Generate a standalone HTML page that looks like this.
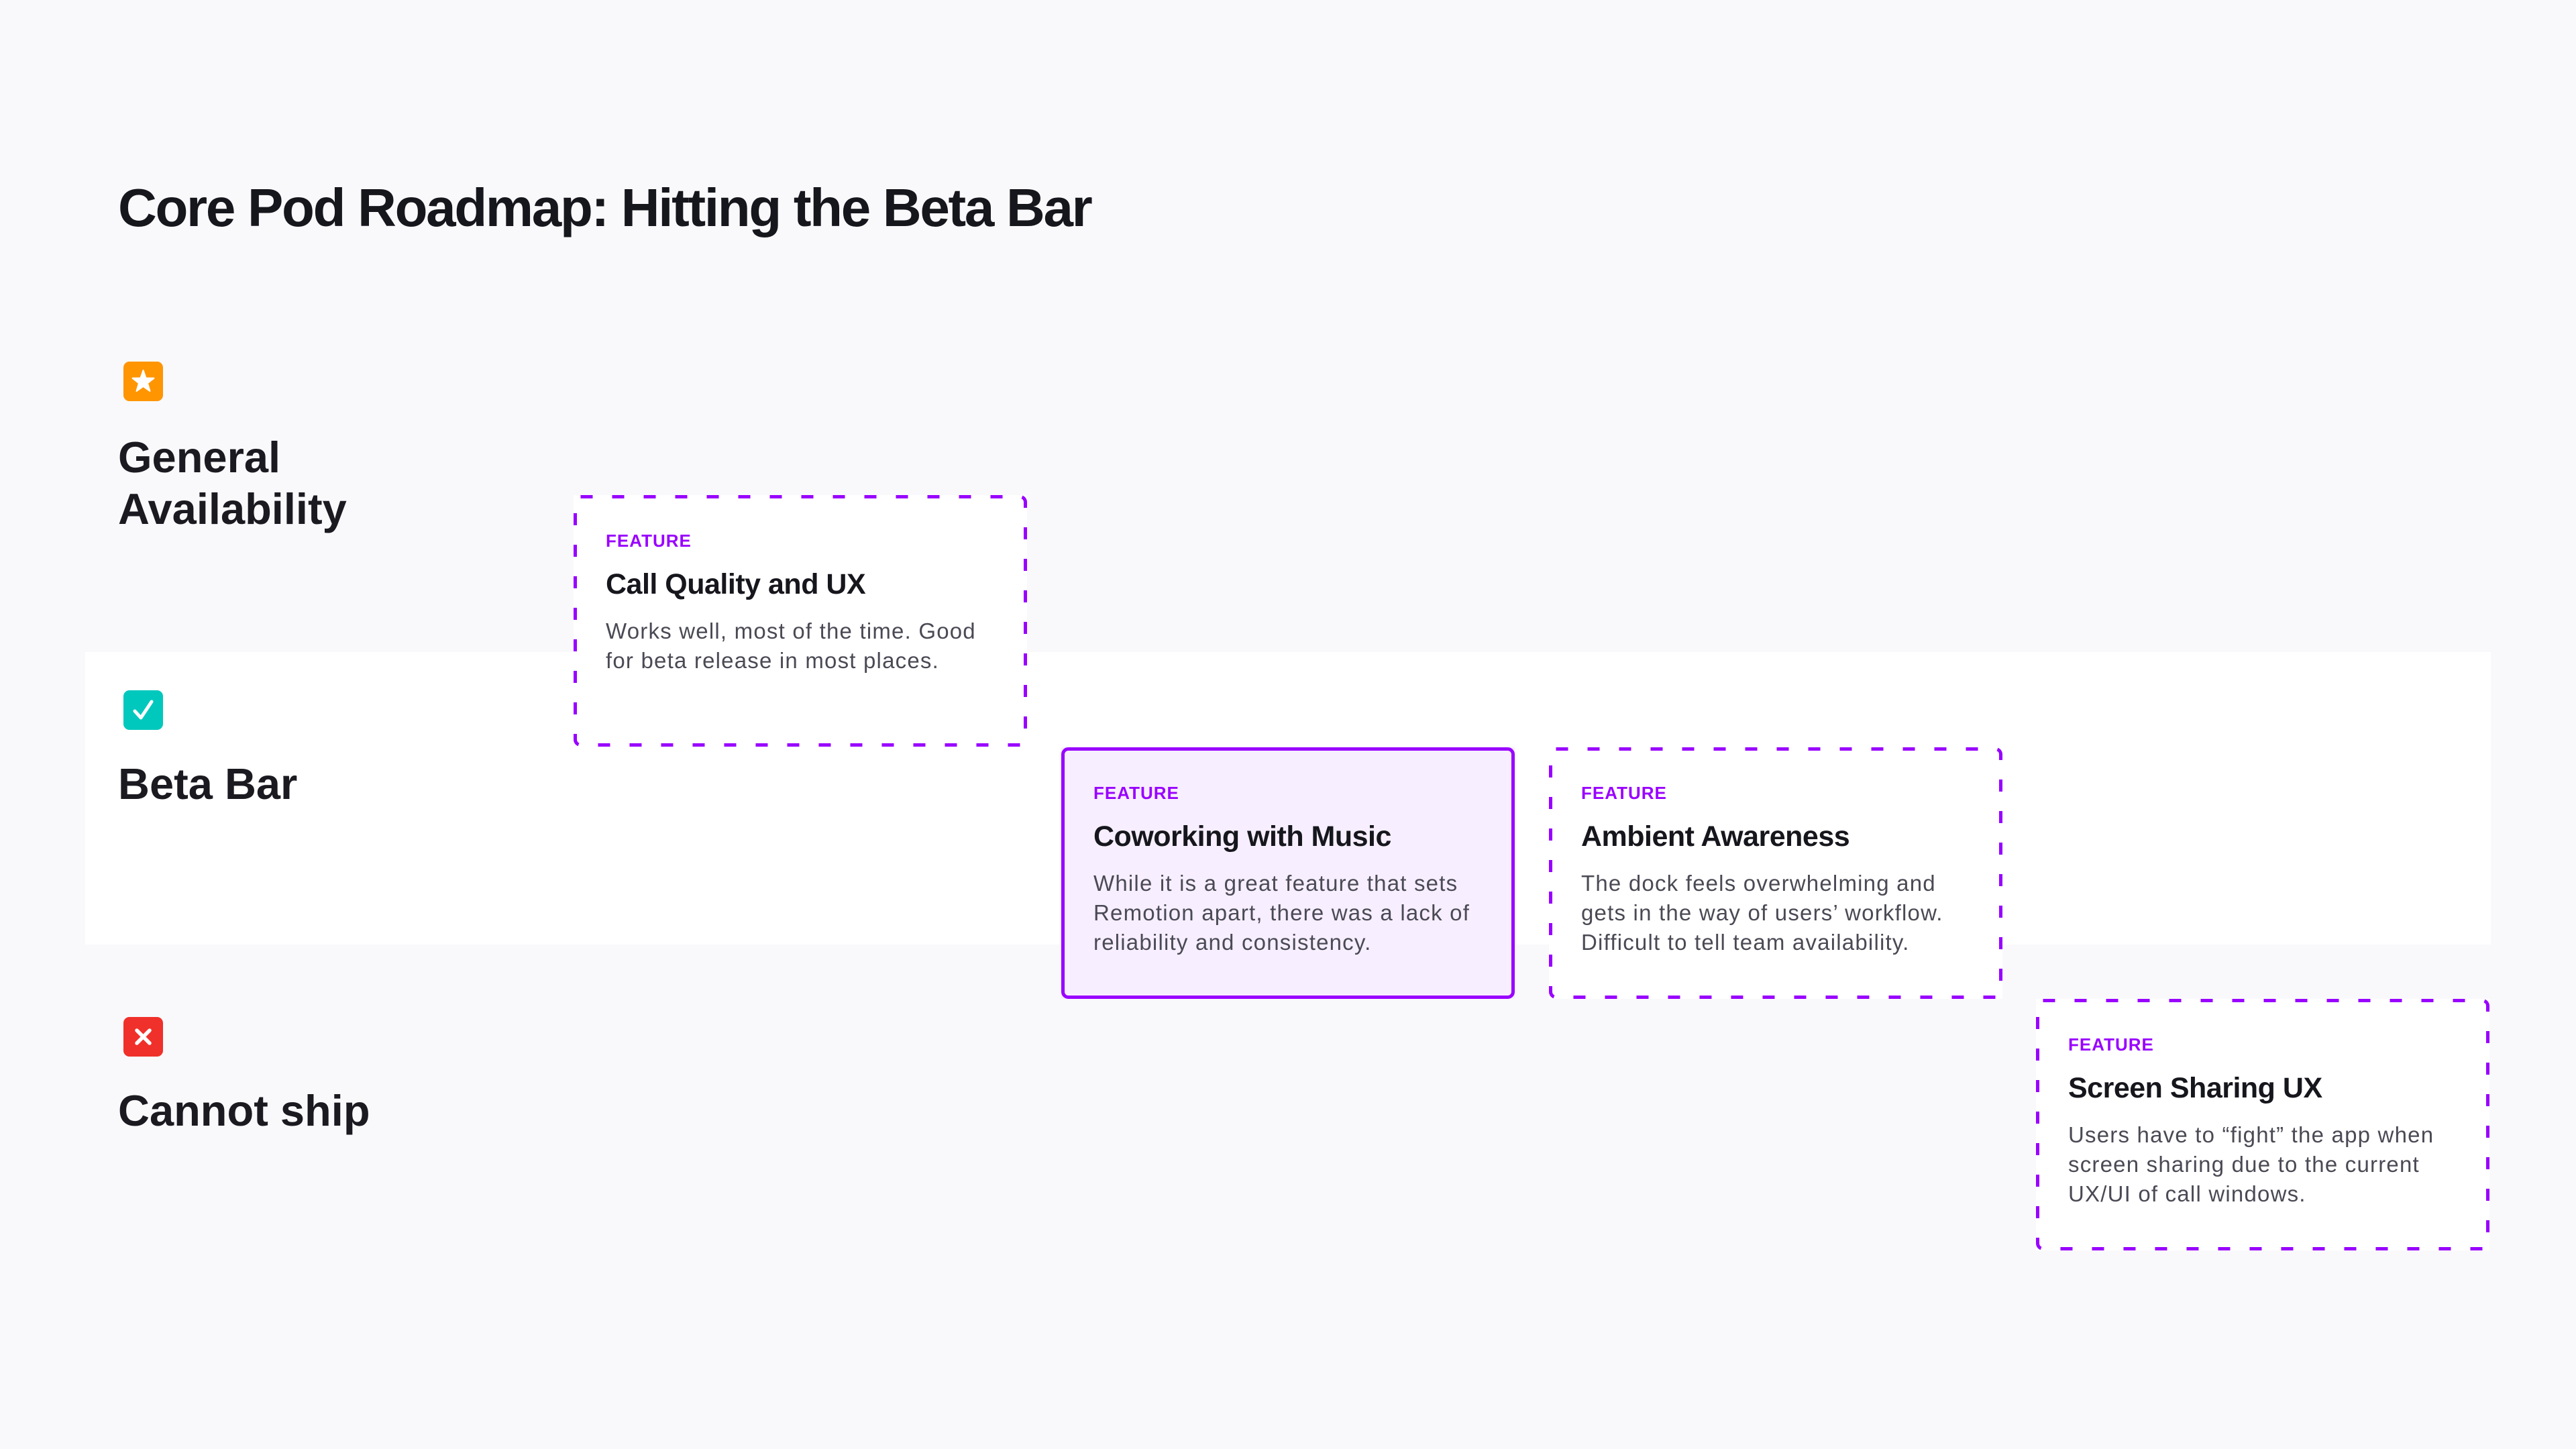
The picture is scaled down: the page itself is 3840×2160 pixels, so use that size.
<!DOCTYPE html>
<html><head><meta charset="utf-8"><style>
*{margin:0;padding:0;box-sizing:border-box}
body{width:3840px;height:2160px;background:#f9f9fb;position:relative;overflow:hidden;font-family:"Liberation Sans",sans-serif;color:#16161d}
.band{position:absolute;left:127px;top:972px;width:3586px;height:436px;background:#fff}
h1{position:absolute;left:176px;top:264px;font-size:80px;font-weight:700;letter-spacing:-2.3px;white-space:nowrap}
.ic{position:absolute;left:184px;width:59px;height:59px;border-radius:9px}
.lab{position:absolute;left:176px;font-size:65px;line-height:77px;font-weight:700;letter-spacing:0px;color:#1a1a20}
.card{position:absolute;width:676px;height:375px;background:#fff}
.card svg{position:absolute;left:0;top:0}
.card .in{position:absolute;left:48px;top:51px;right:36px}
.f{color:#9900ff;font-size:26px;font-weight:700;letter-spacing:1px;line-height:34px}
.t{font-size:43px;font-weight:600;margin-top:22px;line-height:52px;letter-spacing:-0.5px}
.d{font-size:33px;line-height:44px;color:#4a4a55;margin-top:22px;letter-spacing:1.2px}
</style></head><body>
<div class="band"></div>
<h1>Core Pod Roadmap: Hitting the Beta Bar</h1>

<div class="ic" style="top:539px;background:#ff9500"><svg width="59" height="59" viewBox="0 0 59 59"><path d="M29.5 13 L33.5 24.5 L45.5 24.8 L36 32.2 L39.5 44 L29.5 37 L19.5 44 L23 32.2 L13.5 24.8 L25.5 24.5 Z" fill="#fff" stroke="#fff" stroke-width="2" stroke-linejoin="round"/></svg></div>
<div class="lab" style="top:643px">General<br>Availability</div>

<div class="ic" style="top:1029px;background:#00c8bd"><svg width="59" height="59" viewBox="0 0 59 59"><path d="M17 31 L26 41 L42 17" fill="none" stroke="#fff" stroke-width="5" stroke-linecap="round" stroke-linejoin="round"/></svg></div>
<div class="lab" style="top:1130px">Beta Bar</div>

<div class="ic" style="top:1516px;background:#f0302a"><svg width="59" height="59" viewBox="0 0 59 59"><path d="M20 20 L39 39 M39 20 L20 39" fill="none" stroke="#fff" stroke-width="5.5" stroke-linecap="round"/></svg></div>
<div class="lab" style="top:1617px">Cannot ship</div>

<div class="card" style="left:855px;top:738px"><svg width="676" height="375"><rect x="2.5" y="2.5" width="671" height="370" rx="8" fill="none" stroke="#9900ff" stroke-width="5" stroke-dasharray="18 29"/></svg><div class="in"><div class="f">FEATURE</div><div class="t">Call Quality and UX</div><div class="d">Works well, most of the time. Good for beta release in most places.</div></div></div>

<div class="card" style="left:1582px;top:1114px;background:#f7eeff"><svg width="676" height="375"><rect x="2.5" y="2.5" width="671" height="370" rx="8" fill="none" stroke="#9900ff" stroke-width="5"/></svg><div class="in"><div class="f">FEATURE</div><div class="t">Coworking with Music</div><div class="d">While it is a great feature that sets Remotion apart, there was a lack of reliability and consistency.</div></div></div>

<div class="card" style="left:2309px;top:1114px"><svg width="676" height="375"><rect x="2.5" y="2.5" width="671" height="370" rx="8" fill="none" stroke="#9900ff" stroke-width="5" stroke-dasharray="18 29"/></svg><div class="in"><div class="f">FEATURE</div><div class="t">Ambient Awareness</div><div class="d">The dock feels overwhelming and gets in the way of users’ workflow. Difficult to tell team availability.</div></div></div>

<div class="card" style="left:3035px;top:1489px"><svg width="676" height="375"><rect x="2.5" y="2.5" width="671" height="370" rx="8" fill="none" stroke="#9900ff" stroke-width="5" stroke-dasharray="18 29"/></svg><div class="in"><div class="f">FEATURE</div><div class="t">Screen Sharing UX</div><div class="d">Users have to “fight” the app when screen sharing due to the current UX/UI of call windows.</div></div></div>
</body></html>
